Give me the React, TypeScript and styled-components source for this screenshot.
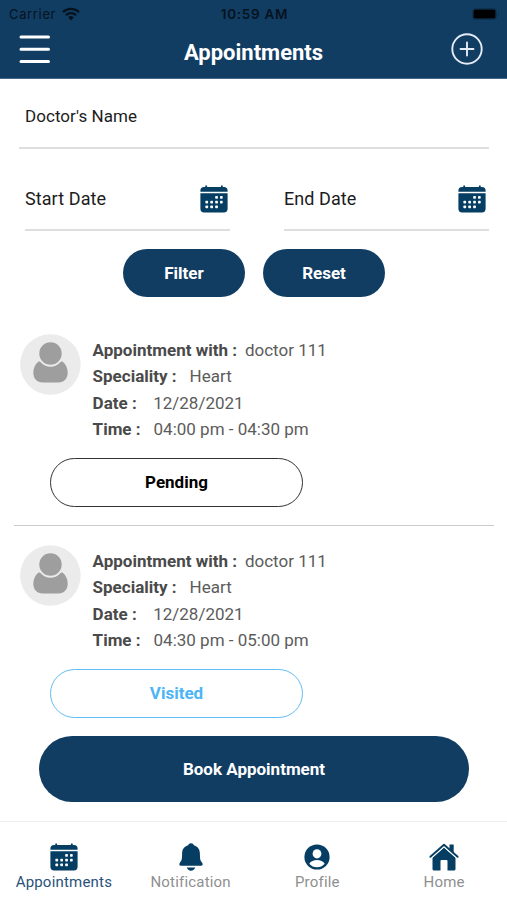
import React from "react";
import styled, { createGlobalStyle } from "styled-components";

const NAVY = "#113d63";
const ICON = "#053e62";

const GlobalStyle = createGlobalStyle`
  * { box-sizing: border-box; }
  html, body { margin: 0; background: #fff; }
  body { font-family: Roboto, sans-serif; color: #1c1c1c; }
  button { font-family: inherit; padding: 0; border: 0; background: none; cursor: pointer; }
  svg { display: block; }
`;

const Screen = styled.div`
  width: 507px;
  height: 900px;
  display: flex;
  flex-direction: column;
  overflow: hidden;
  background: #fff;
`;

const Header = styled.header`
  height: 79px;
  flex: none;
  background: ${NAVY};
  border-bottom: 1px solid #46698a;
`;

const StatusBar = styled.div`
  display: grid;
  grid-template-columns: 1fr auto 1fr;
  align-items: center;
  height: 27px;
  padding: 0 7px 0 9px;
  font-family: Inter, sans-serif;
  font-size: 13px;
  color: #06121e;
`;

const Carrier = styled.div`
  display: flex;
  align-items: center;
  gap: 6px;
  letter-spacing: 0.65px;
`;

const Clock = styled.div`
  font-weight: 600;
  font-size: 13.5px;
  letter-spacing: 0.7px;
`;

const BatterySlot = styled.div`
  display: flex;
  justify-content: flex-end;
`;

const NavBar = styled.div`
  display: grid;
  grid-template-columns: 32px 1fr 32px;
  align-items: start;
  padding: 6px 24px 0 19px;
`;

const Title = styled.h1`
  margin: 7px 0 0 5px;
  font-size: 22px;
  line-height: 26px;
  font-weight: 700;
  color: #fff;
  text-align: center;
`;

const IconButton = styled.button`
  display: flex;
  height: 32px;
`;

const Main = styled.main`
  flex: 1;
  display: flex;
  flex-direction: column;
`;

const Filters = styled.section`
  padding: 0 18px 0 19px;
`;

const NameField = styled.div`
  height: 70px;
  padding: 27px 6px 0;
  border-bottom: 2px solid #dedede;
  font-size: 17px;
  letter-spacing: 0.05px;
  line-height: 20px;
`;

const DateRow = styled.div`
  display: grid;
  grid-template-columns: 205px 205px;
  justify-content: space-between;
  padding-left: 6px;
`;

const DateField = styled.div`
  display: flex;
  justify-content: space-between;
  height: 82px;
  padding: 36px 2px 0 0;
  border-bottom: 2px solid #dedede;
  font-size: 18px;
  letter-spacing: 0.08px;
  line-height: 28px;

  & + & {
    padding-right: 3px;
  }
`;

const FilterActions = styled.div`
  display: flex;
  justify-content: center;
  gap: 18px;
  margin-top: 18px;
`;

const PillButton = styled.button<{ $large?: boolean }>`
  width: ${(p) => (p.$large ? 430 : 122)}px;
  height: ${(p) => (p.$large ? 66 : 48)}px;
  padding-bottom: 1px;
  border-radius: 33px;
  background: ${NAVY};
  color: #fff;
  font-size: 17px;
  font-weight: 700;
`;

const List = styled.section`
  padding: 37px 13px 0 14px;
`;

const Card = styled.article`
  display: grid;
  grid-template-columns: 61px 1fr;
  grid-template-rows: 124px 49px;
  column-gap: 12px;
  height: 192px;
  padding-left: 5.600px;
  border-bottom: 1px solid #cccccc;

  & + & {
    margin-top: 19px;
    border-bottom: 0;
  }
`;

const Details = styled.dl`
  margin: 3px 0 0;
  font-size: 17px;
  line-height: 26.4px;
`;

const Detail = styled.div<{ $gap: number }>`
  display: flex;
  gap: ${(p) => p.$gap}px;
`;

const Term = styled.dt`
  font-weight: 700;
  color: #4a4a4a;
`;

const Value = styled.dd`
  margin: 0;
  color: #5c5c5c;
`;

const Status = styled.button<{ $tone: string; $edge: string }>`
  grid-column: 1 / -1;
  width: 253px;
  height: 49px;
  margin-left: 30.400px;
  padding-bottom: 1px;
  border: 1.5px solid ${(p) => p.$edge};
  border-radius: 25px;
  color: ${(p) => p.$tone};
  font-size: 17px;
  font-weight: 700;
`;

const BookRow = styled.div`
  display: flex;
  margin-top: -1px;
  padding-left: 39px;
`;

const TabBar = styled.nav`
  flex: none;
  display: grid;
  grid-template-columns: repeat(4, 1fr);
  height: 79px;
  padding-top: 21px;
  border-top: 1px solid #ececec;
`;

const Tab = styled.a<{ $active?: boolean }>`
  display: flex;
  flex-direction: column;
  align-items: center;
  gap: 1px;
  padding-left: 1px;
  font-size: 15px;
  line-height: 20px;
  letter-spacing: 0.2px;
  color: ${(p) => (p.$active ? "#28527a" : "#8f8f8f")};
`;

const CalendarIcon = () => (
  <svg width="28" height="28" viewBox="0 0 28 28" fill={ICON}>
    <path d="M5.3 0.5h1.8v1.6h13.8V.5h1.8v1.6h1.2a3.7 3.7 0 0 1 3.7 3.7v1H.4v-1a3.7 3.7 0 0 1 3.7-3.7h1.2z" />
    <path d="M.4 8.2h27.2v15.500a3.7 3.7 0 0 1-3.7 3.7H4.1a3.7 3.7 0 0 1-3.7-3.7z" />
    <g fill="#fff">
      {[
        [15.2, 11], [20, 11],
        [5.4, 15.8], [10.3, 15.8], [15.2, 15.8], [20, 15.8],
        [5.4, 20.6], [10.3, 20.6], [15.2, 20.6],
      ].map(([x, y]) => (
        <rect key={`${x}-${y}`} x={x} y={y} width="2.7" height="2.7" rx="0.7" />
      ))}
    </g>
  </svg>
);

const BellIcon = () => (
  <svg width="28" height="28" viewBox="0 0 28 28" fill={ICON}>
    <path d="M14 .3c-1.500 0-2.500.8-2.800 1.900C7.300 3.300 5.100 6.200 5.100 10.500c0 6.200-.6 7.200-2.100 9-1.200 1.500-.8 3.200 1 3.200h20c1.800 0 2.200-1.700 1-3.200-1.500-1.800-2.100-2.800-2.100-9 0-4.300-2.200-7.200-6.100-8.300C16.500 1.100 15.500.3 14 .3z" />
    <path d="M9.800 24.600h8.400a4.400 4.400 0 0 1-8.400 0z" />
  </svg>
);

const ProfileIcon = () => (
  <svg width="28" height="28" viewBox="0 0 28 28">
    <circle cx="14" cy="14" r="12.600" fill={ICON} />
    <ellipse cx="14" cy="10.800" rx="4.400" ry="4.600" fill="#fff" />
    <path d="M6.300 20.700c1.500-2.500 4.600-3.700 7.700-3.700s6.200 1.200 7.700 3.700a10.200 10.200 0 0 1-15.400 0z" fill="#fff" />
  </svg>
);

const HomeIcon = () => (
  <svg width="30" height="28" viewBox="0 0 30 28" fill={ICON}>
    <path d="M3.500 14.800 15 4.600l11.500 10.200V26a1.500 1.500 0 0 1-1.500 1.500h-6.500V18a1 1 0 0 0-1-1h-5a1 1 0 0 0-1 1v9.500H5A1.500 1.500 0 0 1 3.500 26z" />
    <path d="M1.400 13.800 15 1.700l13.600 12.100" fill="none" stroke="#fff" strokeWidth="4.200" />
    <path d="M20.500 1.500h4.200v8.900l-4.200-3.800z" />
    <path d="M1.400 13.800 15 1.700l13.600 12.100" fill="none" stroke={ICON} strokeWidth="1.900" strokeLinecap="round" strokeLinejoin="round" />
  </svg>
);

const Avatar = () => (
  <svg width="61" height="61" viewBox="0 0 61 61">
    <circle cx="30.400" cy="30.500" r="30.300" fill="#ebebeb" />
    <path d="M18.500 27.500h24c3.400 2.600 5.200 6.700 5.200 11.200 0 5.900-3.800 9.800-9.200 9.800h-16c-5.400 0-9.200-3.900-9.200-9.800 0-4.500 1.800-8.600 5.200-11.200z" fill="#9e9e9e" />
    <circle cx="30.500" cy="19.500" r="12.200" fill="#9e9e9e" stroke="#ebebeb" strokeWidth="2" />
  </svg>
);

const WifiIcon = () => (
  <svg width="18" height="14" viewBox="0 0 18 14" fill="none" stroke="#06121e" strokeWidth="2.300">
    <path d="M.9 5.100a11.600 11.600 0 0 1 16.200 0" />
    <path d="M3.900 8.200a7.300 7.300 0 0 1 10.200 0" />
    <path d="M6.300 10.400a3.900 3.900 0 0 1 5.400 0L9 13.400z" fill="#06121e" stroke="none" />
  </svg>
);

const BatteryIcon = () => (
  <svg width="28" height="12" viewBox="0 0 28 12">
    <rect x=".5" y=".5" width="24" height="11" rx="3" fill="none" stroke="#0d304f" />
    <rect x="1.500" y="1.500" width="22" height="9" rx="1.500" fill="#000" />
    <path d="M26 4v4c1.300-.5 1.300-3.500 0-4z" fill="#0d304f" />
  </svg>
);

const appointments = [
  { doctor: "doctor 111", speciality: "Heart", date: "12/28/2021", time: "04:00 pm - 04:30 pm", status: "Pending", tone: "#000", edge: "#333" },
  { doctor: "doctor 111", speciality: "Heart", date: "12/28/2021", time: "04:30 pm - 05:00 pm", status: "Visited", tone: "#4db5f5", edge: "#62bdf3" },
];

export default function App() {
  return (
    <Screen>
      <GlobalStyle />
      <Header>
        <StatusBar>
          <Carrier>Carrier <WifiIcon /></Carrier>
          <Clock>10:59 AM</Clock>
          <BatterySlot><BatteryIcon /></BatterySlot>
        </StatusBar>
        <NavBar>
          <IconButton aria-label="Menu">
            <svg width="32" height="32" viewBox="0 0 32 32" stroke="#fff" strokeWidth="3" strokeLinecap="round">
              <path d="M2 4h27.500M2 16.200h27.500M2 28.400h27.500" />
            </svg>
          </IconButton>
          <Title>Appointments</Title>
          <IconButton aria-label="Add">
            <svg width="32" height="32" viewBox="0 0 32 32" fill="none" stroke="#e4ebf5" strokeWidth="1.900" strokeLinecap="round">
              <circle cx="16" cy="16" r="14.700" />
              <path d="M16 9.500v13M9.500 16h13" />
            </svg>
          </IconButton>
        </NavBar>
      </Header>

      <Main>
        <Filters>
          <NameField>Doctor's Name</NameField>
          <DateRow>
            <DateField>Start Date <CalendarIcon /></DateField>
            <DateField>End Date <CalendarIcon /></DateField>
          </DateRow>
          <FilterActions>
            <PillButton>Filter</PillButton>
            <PillButton>Reset</PillButton>
          </FilterActions>
        </Filters>

        <List>
          {appointments.map((a) => (
            <Card key={a.time}>
              <Avatar />
              <Details>
                <Detail $gap={8}><Term>Appointment with :</Term><Value>{a.doctor}</Value></Detail>
                <Detail $gap={13}><Term>Speciality :</Term><Value>{a.speciality}</Value></Detail>
                <Detail $gap={16.5}><Term>Date :</Term><Value>{a.date}</Value></Detail>
                <Detail $gap={13}><Term>Time :</Term><Value>{a.time}</Value></Detail>
              </Details>
              <Status $tone={a.tone} $edge={a.edge}>{a.status}</Status>
            </Card>
          ))}
        </List>

        <BookRow>
          <PillButton $large>Book Appointment</PillButton>
        </BookRow>
      </Main>

      <TabBar>
        <Tab $active><CalendarIcon />Appointments</Tab>
        <Tab><BellIcon />Notification</Tab>
        <Tab><ProfileIcon />Profile</Tab>
        <Tab><HomeIcon />Home</Tab>
      </TabBar>
    </Screen>
  );
}
